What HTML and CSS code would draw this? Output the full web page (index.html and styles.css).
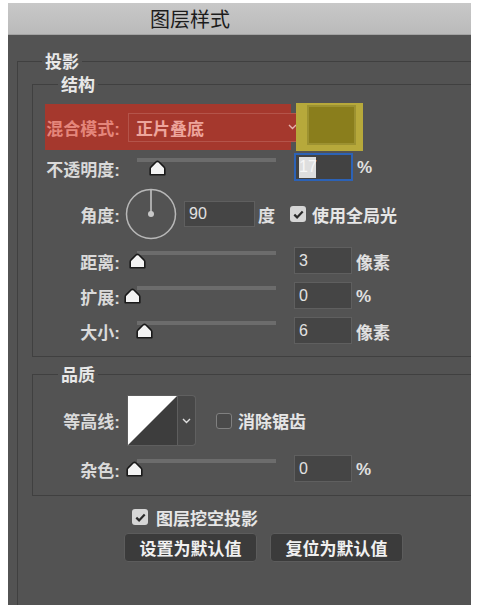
FILE: index.html
```html
<!DOCTYPE html>
<html lang="zh-CN">
<head>
<meta charset="utf-8">
<title>图层样式</title>
<link rel="stylesheet" href="styles.css">
</head>
<body>
<div class="window">
  <div class="titlebar"><span class="title">图层样式</span></div>
  <div class="panel">
    <fieldset class="group outer">
      <legend class="legend legend-outer">投影</legend>

      <fieldset class="group inner structure">
        <legend class="legend legend-inner">结构</legend>

        <div class="row blend-row">
          <div class="blend-hl">
            <span class="label">混合模式:</span>
            <div class="select">
              <span class="select-text">正片叠底</span>
              <svg class="chev" width="9" height="6" viewBox="0 0 9 6"><path d="M1 1l3.5 3.5L8 1" fill="none" stroke="#e6b3ad" stroke-width="1.4"/></svg>
            </div>
          </div>
          <div class="swatch"><div class="swatch-inner"></div></div>
        </div>

        <div class="row slider-row opacity-row">
          <span class="label">不透明度:</span>
          <div class="slider">
            <div class="track"></div>
            <svg class="thumb" style="margin-left:29px" width="17" height="16" viewBox="0 0 17 16"><path d="M1.2 14.8V8.8Q1.2 7.7 2.1 6.9L7 2Q8.5 0.7 10 2L14.9 6.9Q15.8 7.7 15.8 8.8V14.8Z" fill="#f3f3f3" stroke="#1a1a1a" stroke-width="1.6" stroke-linejoin="round"/></svg>
          </div>
          <div class="num num-focus"><span class="sel">17</span></div>
          <span class="unit">%</span>
        </div>

        <div class="row angle-row">
          <span class="label">角度:</span>
          <svg class="dial" width="52" height="52" viewBox="0 0 52 52">
            <circle cx="26" cy="26" r="24.5" fill="none" stroke="#b8b8b8" stroke-width="1.5"/>
            <line x1="26" y1="26" x2="26" y2="2" stroke="#c8c8c8" stroke-width="1.5"/>
            <circle cx="26" cy="26" r="3" fill="#c8c8c8"/>
          </svg>
          <div class="num num-wide">90</div>
          <span class="unit unit-deg">度</span>
          <span class="check checked"><svg width="11" height="9" viewBox="0 0 11 9"><path d="M1.3 4.6l2.8 2.8L9.7 1.6" fill="none" stroke="#2a2a2a" stroke-width="2.2"/></svg></span>
          <span class="check-text">使用全局光</span>
        </div>

        <div class="row slider-row">
          <span class="label">距离:</span>
          <div class="slider">
            <div class="track"></div>
            <svg class="thumb" style="margin-left:9px" width="17" height="16" viewBox="0 0 17 16"><path d="M1.2 14.8V8.8Q1.2 7.7 2.1 6.9L7 2Q8.5 0.7 10 2L14.9 6.9Q15.8 7.7 15.8 8.8V14.8Z" fill="#f3f3f3" stroke="#1a1a1a" stroke-width="1.6" stroke-linejoin="round"/></svg>
          </div>
          <div class="num">3</div>
          <span class="unit">像素</span>
        </div>

        <div class="row slider-row">
          <span class="label">扩展:</span>
          <div class="slider">
            <div class="track"></div>
            <svg class="thumb" style="margin-left:4px" width="17" height="16" viewBox="0 0 17 16"><path d="M1.2 14.8V8.8Q1.2 7.7 2.1 6.9L7 2Q8.5 0.7 10 2L14.9 6.9Q15.8 7.7 15.8 8.8V14.8Z" fill="#f3f3f3" stroke="#1a1a1a" stroke-width="1.6" stroke-linejoin="round"/></svg>
          </div>
          <div class="num">0</div>
          <span class="unit">%</span>
        </div>

        <div class="row slider-row">
          <span class="label">大小:</span>
          <div class="slider">
            <div class="track"></div>
            <svg class="thumb" style="margin-left:16px" width="17" height="16" viewBox="0 0 17 16"><path d="M1.2 14.8V8.8Q1.2 7.7 2.1 6.9L7 2Q8.5 0.7 10 2L14.9 6.9Q15.8 7.7 15.8 8.8V14.8Z" fill="#f3f3f3" stroke="#1a1a1a" stroke-width="1.6" stroke-linejoin="round"/></svg>
          </div>
          <div class="num">6</div>
          <span class="unit">像素</span>
        </div>
      </fieldset>

      <fieldset class="group inner quality">
        <legend class="legend legend-inner">品质</legend>

        <div class="row contour-row">
          <span class="label">等高线:</span>
          <div class="contour">
            <svg class="contour-box" width="51" height="51" viewBox="0 0 51 51">
              <rect x="0" y="0" width="51" height="51" fill="#3d3d3d"/>
              <polygon points="0,0 51,0 0,51" fill="#ffffff"/>
            </svg>
            <div class="contour-drop">
              <svg width="9" height="6" viewBox="0 0 9 6"><path d="M1 1l3.5 3.5L8 1" fill="none" stroke="#e0e0e0" stroke-width="1.4"/></svg>
            </div>
          </div>
          <span class="check unchecked"></span>
          <span class="check-text">消除锯齿</span>
        </div>

        <div class="row slider-row noise-row">
          <span class="label">杂色:</span>
          <div class="slider">
            <div class="track"></div>
            <svg class="thumb" style="margin-left:6px" width="17" height="16" viewBox="0 0 17 16"><path d="M1.2 14.8V8.8Q1.2 7.7 2.1 6.9L7 2Q8.5 0.7 10 2L14.9 6.9Q15.8 7.7 15.8 8.8V14.8Z" fill="#f3f3f3" stroke="#1a1a1a" stroke-width="1.6" stroke-linejoin="round"/></svg>
          </div>
          <div class="num">0</div>
          <span class="unit">%</span>
        </div>
      </fieldset>

      <div class="row knockout-row">
        <span class="check checked"><svg width="11" height="9" viewBox="0 0 11 9"><path d="M1.3 4.6l2.8 2.8L9.7 1.6" fill="none" stroke="#2a2a2a" stroke-width="2.2"/></svg></span>
        <span class="check-text">图层挖空投影</span>
      </div>

      <div class="row button-row">
        <button class="btn" type="button">设置为默认值</button>
        <button class="btn" type="button">复位为默认值</button>
      </div>
    </fieldset>
  </div>
</div>
</body>
</html>
```

FILE: styles.css
```css
* { box-sizing: border-box; }

body {
  margin: 0;
  background: #ffffff;
  font-family: "Liberation Sans", "Noto Sans CJK SC", sans-serif;
}

.window {
  margin: 3px 0 0 8px;
  width: 463px;
  height: 602px;
  background: #535353;
  overflow: hidden;
  display: flex;
  flex-direction: column;
}

.titlebar {
  flex: none;
  height: 32px;
  background: linear-gradient(#c8c8c8, #bababa);
  border-bottom: 1px solid #a3a3a3;
  display: flex;
  align-items: center;
  padding-left: 142px;
}

.title {
  font-family: "Noto Sans CJK SC", sans-serif;
  font-size: 20px;
  color: #1c1c1c;
  line-height: 1;
}

.panel {
  padding: 15px 0 0 9px;
}

.group {
  margin: 0;
  border: 1px solid #404040;
  border-right: none;
  min-width: 0;
}

.outer {
  padding: 1px 0 0 14px;
  min-height: 590px;
}

.inner {
  padding: 8px 0 12px 12px;
}

.quality {
  margin-top: 6px;
  padding: 10px 0 13px 12px;
}

.legend {
  font-family: "Noto Sans CJK SC", sans-serif;
  font-size: 17px;
  font-weight: bold;
  line-height: 22px;
  color: #e8e8e8;
  padding: 0 3px;
}

.legend-outer { margin-left: 10px; }
.legend-inner { margin-left: 13px; }

.row {
  display: flex;
  align-items: center;
}

.label {
  flex: none;
  width: 75px;
  text-align: right;
  font-size: 17px;
  font-weight: bold;
  color: #dadada;
  white-space: nowrap;
}

/* blend mode row (highlighted) */
.blend-row { height: 48px; }

.blend-hl {
  flex: none;
  width: 246px;
  height: 46px;
  background: #a5382d;
  display: flex;
  align-items: center;
}

.blend-hl .label { color: #e4867b; }

.select {
  flex: none;
  margin-left: 8px;
  width: 172px;
  height: 29px;
  border: 1px solid #b4544a;
  background: #a5382d;
  display: flex;
  align-items: center;
  justify-content: space-between;
  padding: 0 2px 0 7px;
}

.select-text {
  font-size: 17px;
  font-weight: bold;
  color: #eda59c;
}

.chev { flex: none; }

.swatch {
  flex: none;
  margin-left: 5px;
  width: 67px;
  height: 48px;
  background: #b7a93b;
  padding: 2px 7px 6px 11px;
}

.swatch-inner {
  width: 100%;
  height: 100%;
  background: #8a7e1c;
  border: 2px solid #9d9231;
}

/* slider rows */
.slider-row {
  margin-top: 8px;
  height: 27px;
  align-items: flex-start;
}

.slider-row .label,
.slider-row .unit { align-self: center; margin-top: 2px; }

.opacity-row { margin-top: 2px; height: 28px; }

.slider {
  flex: none;
  width: 174px;
  padding-top: 4px;
}

.opacity-row .slider { padding-top: 5px; }

.track {
  margin-left: 17px;
  width: 139px;
  height: 4px;
  background: #6c6c6c;
}

.thumb {
  display: block;
  margin-top: -2px;
}

.num {
  flex: none;
  width: 58px;
  height: 27px;
  border: 1px solid #5f5f5f;
  background: #454545;
  color: #e2e2e2;
  font-size: 16px;
  padding-left: 4px;
  display: flex;
  align-items: center;
}

.num-focus {
  width: 59px;
  height: 28px;
  border: 2px solid #2c62b6;
  background: #424242;
  padding-left: 3px;
}

.sel {
  background: #dedede;
  color: #f6f6f6;
  height: 21px;
  width: 17px;
  display: flex;
  align-items: center;
  font-size: 16px;
}

.num-wide {
  width: 71px;
  height: 26px;
  margin-left: 7px;
}

.unit {
  flex: none;
  margin-left: 4px;
  font-size: 17px;
  font-weight: bold;
  color: #e0e0e0;
}

.unit-deg { margin-left: 3px; }

/* angle row */
.angle-row {
  margin-top: 8px;
  height: 50px;
}

.dial {
  flex: none;
  margin-left: 5px;
}

/* checkboxes */
.check {
  flex: none;
  width: 16px;
  height: 16px;
  border-radius: 3px;
  display: flex;
  align-items: center;
  justify-content: center;
}

.checked { background: #d6d6d6; }

.unchecked {
  border: 1.5px solid #808080;
  background: #4a4a4a;
}

.check-text {
  font-size: 17px;
  font-weight: bold;
  color: #e6e6e6;
  margin-left: 6px;
  white-space: nowrap;
}

.angle-row .check { margin-left: 15px; }

/* contour row */
.contour-row { height: 51px; }

.contour {
  flex: none;
  margin-left: 7px;
  display: flex;
}

.contour-box {
  display: block;
  border: 1px solid #5e5e5e;
}

.contour-drop {
  width: 18px;
  height: 51px;
  background: #474747;
  border: 1px solid #606060;
  border-left: none;
  border-radius: 0 4px 4px 0;
  display: flex;
  align-items: center;
  justify-content: center;
}

.contour-row .check { margin-left: 20px; }

.noise-row { margin-top: 9px; }

/* bottom */
.knockout-row {
  margin-top: 10px;
  height: 22px;
  padding-left: 100px;
}

.knockout-row .check-text { margin-left: 8px; }

.button-row {
  margin-top: 5px;
  padding-left: 92px;
  gap: 13px;
}

.btn {
  width: 133px;
  height: 29px;
  background: #3b3b3b;
  border: 1px solid #5c5c5c;
  border-radius: 4px;
  color: #f0f0f0;
  font-family: "Noto Sans CJK SC", sans-serif;
  font-size: 17px;
  font-weight: bold;
  padding: 0;
  line-height: 1;
}
```
